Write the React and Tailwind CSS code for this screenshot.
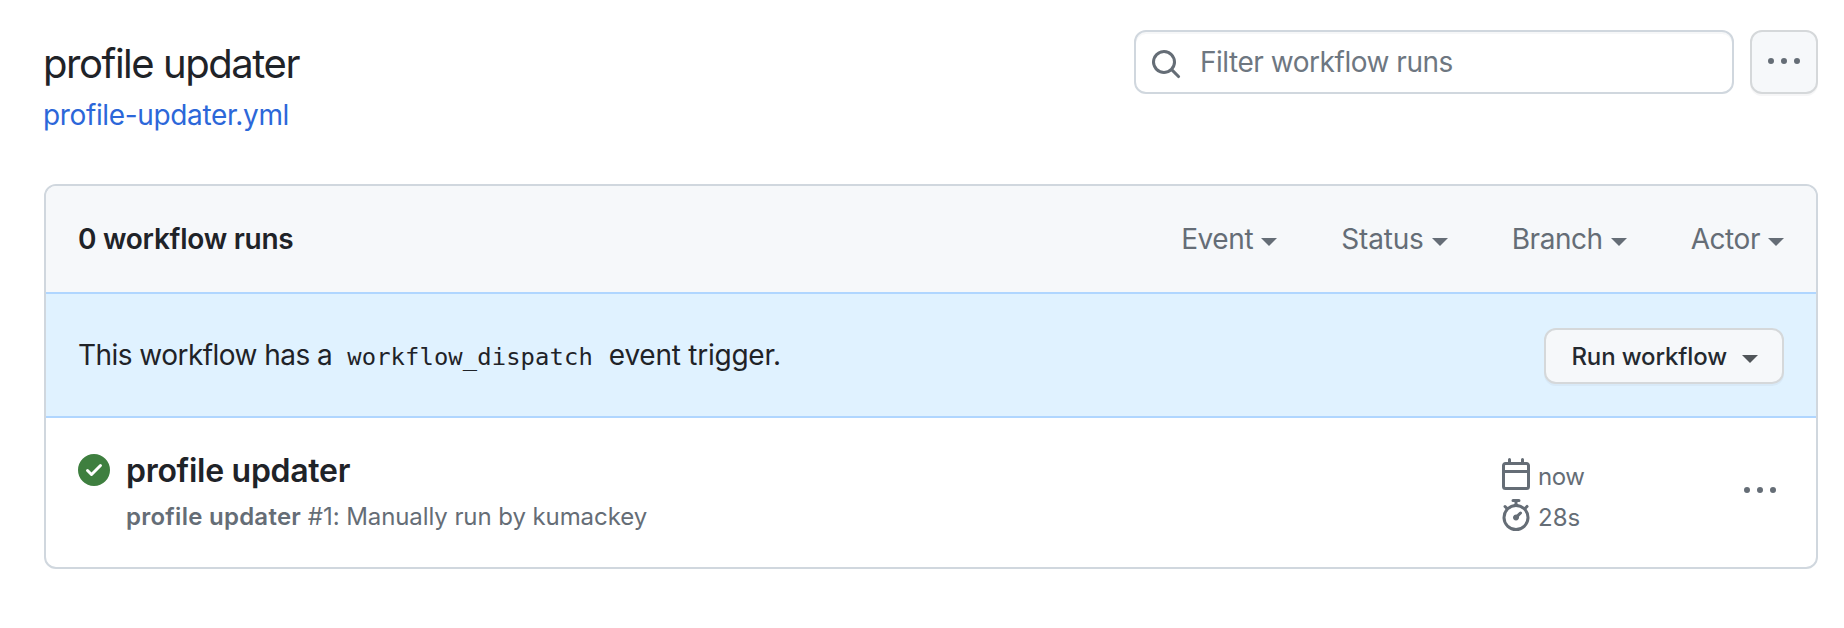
import React from "react";

function Icon({ d, className = "" }) {
  return (
    <svg viewBox="0 0 16 16" className={`block size-8 shrink-0 fill-current ${className}`} aria-hidden="true">
      <path fillRule="evenodd" d={d} />
    </svg>
  );
}

const SEARCH =
  "M11.5 7a4.499 4.499 0 11-8.998 0A4.499 4.499 0 0111.5 7zm-.82 4.74a6 6 0 111.06-1.06l3.04 3.04a.75.75 0 11-1.06 1.06l-3.04-3.04z";
const KEBAB =
  "M8 9a1.5 1.5 0 100-3 1.5 1.5 0 000 3zM1.5 9a1.5 1.5 0 100-3 1.5 1.5 0 000 3zm13 0a1.5 1.5 0 100-3 1.5 1.5 0 000 3z";
const CHECK =
  "M8 16A8 8 0 108 0a8 8 0 000 16zm3.78-9.72a.75.75 0 00-1.06-1.06L6.75 9.19 5.28 7.72a.75.75 0 00-1.06 1.06l2 2a.75.75 0 001.06 0l4.5-4.5z";
const CALENDAR =
  "M4.75 0a.75.75 0 01.75.75V2h5V.75a.75.75 0 011.5 0V2h1.25c.966 0 1.75.784 1.75 1.75v10.5A1.75 1.75 0 0113.25 16H2.75A1.75 1.75 0 011 14.25V3.75C1 2.784 1.784 2 2.75 2H4V.75A.75.75 0 014.75 0zM2.5 7.5v6.75c0 .138.112.25.25.25h10.5a.25.25 0 00.25-.25V7.5zm10.75-4H2.75a.25.25 0 00-.25.25V6h11V3.75a.25.25 0 00-.25-.25z";
const STOPWATCH =
  "M5.75.75A.75.75 0 016.5 0h3a.75.75 0 010 1.5h-.75v1l-.001.041a6.718 6.718 0 013.464 1.435l.007-.006.75-.75a.75.75 0 111.06 1.06l-.75.75-.006.007a6.75 6.75 0 11-10.548 0L2.72 5.03l-.75-.75a.75.75 0 011.06-1.06l.75.75.007.006A6.718 6.718 0 017.25 2.541a.756.756 0 010-.041v-1H6.5a.75.75 0 01-.75-.75zM8 14.5A5.25 5.25 0 108 4a5.25 5.25 0 000 10.5zm.389-6.7l1.33-1.33a.75.75 0 111.061 1.06L9.45 8.861A1.502 1.502 0 018 10.75a1.5 1.5 0 11.389-2.95z";

function Caret({ className = "" }) {
  return (
    <svg viewBox="0 0 16 8" className={`block h-2 w-4 shrink-0 fill-current ${className}`} aria-hidden="true">
      <path d="M0 0h16L8 8z" />
    </svg>
  );
}

const FILTERS = [
  { label: "Event", tracking: "tracking-[-0.4px]" },
  { label: "Status", tracking: "tracking-[-0.16px]" },
  { label: "Branch", tracking: "tracking-[-0.45px]" },
  { label: "Actor", tracking: "tracking-[-0.45px]" },
];

export default function App() {
  return (
    <div className="h-[628px] overflow-hidden bg-white pr-[26px] pl-11 font-['Inter',sans-serif] text-[28px] leading-[42px] text-[#1f2328]">
      <header className="flex h-[184px] items-start justify-between">
        <div className="pt-9">
          <h1 className="-ml-px text-[40px] leading-[56px] font-normal tracking-[-1.45px]">profile updater</h1>
          <a href="#" className="mt-0.5 -ml-px block tracking-[-0.36px] text-[#2c67d9]">profile-updater.yml</a>
        </div>
        <div className="flex gap-4 pt-[30px]">
          <div className="flex h-16 w-[600px] items-center rounded-xl border-2 border-[#d0d7de] px-3.5 shadow-[inset_0_2px_0_rgba(208,215,222,0.2)]">
            <Icon d={SEARCH} className="mt-1 text-[#656d76]" />
            <span className="ml-[18px] tracking-[-0.47px] text-[#6e7781]">Filter workflow runs</span>
          </div>
          <button className="flex h-16 w-[68px] items-center justify-center rounded-xl border-2 border-[#d5d8da] bg-[#f6f8fa] text-[#656d76] shadow-[0_2px_0_rgba(31,35,40,0.04)]">
            <Icon d={KEBAB} />
          </button>
        </div>
      </header>

      <section className="overflow-hidden rounded-xl border-2 border-[#d0d7de]">
        <div className="flex h-[106px] items-center justify-between bg-[#f6f8fa] px-8">
          <h2 className="font-semibold tracking-[-0.26px]">0 workflow runs</h2>
          <div className="flex gap-16 text-[#656d76]">
            {FILTERS.map((f) => (
              <button key={f.label} className="flex items-center gap-2">
                <span className={f.tracking}>{f.label}</span>
                <Caret className="mt-1.5" />
              </button>
            ))}
          </div>
        </div>

        <div className="flex h-[126px] items-center justify-between border-y-2 border-[#b0d6ff] bg-[#e0f2ff] px-8">
          <p className="flex items-baseline pt-0.5">
            <span className="tracking-[-0.54px]">This workflow has a</span>
            <code className="ml-[15px] font-['DejaVu_Sans_Mono',monospace] text-[23.8px] tracking-[0.12px]">workflow_dispatch</code>
            <span className="ml-4 tracking-[-0.24px]">event trigger.</span>
          </p>
          <button className="mt-0.5 flex h-14 items-center rounded-xl border-2 border-[#d5d8da] bg-[#f6f8fa] pr-6 pl-[25px] text-[24px] leading-[40px] font-medium text-[#24292f] shadow-[0_2px_0_rgba(31,35,40,0.04)]">
            <span className="pt-0.5 tracking-[-0.12px]">Run workflow</span>
            <Caret className="mt-1.5 ml-[15px] text-[#505559]" />
          </button>
        </div>

        <div className="flex h-[149px] items-start pr-10 pl-8">
          <Icon d={CHECK} className="mt-9 text-[#3e7f3f]" />
          <div className="ml-4 flex-1 pt-[29px]">
            <h3 className="text-[32px] leading-[48px] font-semibold tracking-[-0.28px]">profile updater</h3>
            <p className="mt-1 text-[24px] leading-[36px] text-[#656d76]">
              <strong className="font-semibold tracking-[0.26px]">profile updater</strong>
              <span className="tracking-[-0.08px]"> #1: Manually run by kumackey</span>
            </p>
          </div>
          <div className="mt-10 flex w-[244px] flex-col gap-[5px] text-[24px] leading-[36px] text-[#656d76]">
            <div className="flex h-9 items-start gap-1.5">
              <Icon d={CALENDAR} />
              <span className="pt-px tracking-[-0.5px]">now</span>
            </div>
            <div className="flex h-9 items-start gap-1.5">
              <Icon d={STOPWATCH} />
              <span className="pt-px">28s</span>
            </div>
          </div>
          <button className="mt-[57px] text-[#656d76]">
            <Icon d={KEBAB} />
          </button>
        </div>
      </section>
    </div>
  );
}
